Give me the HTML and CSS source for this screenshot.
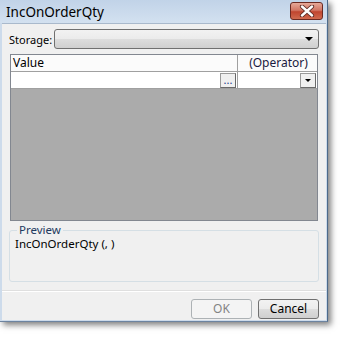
FILE: index.html
```html
<html>
    <head>
        <link rel="stylesheet" href="styles.css">
    </head>
    <body>
        <div id="window">
            <div class="titlebar">
                <span class="title">IncOnOrderQty</span>
                <div class="closeBtn">
                    <svg width="16" height="12" viewBox="0 0 16 12">
                        <path d="M3 1.5 L13 10.5 M13 1.5 L3 10.5" stroke="#5a2a24" stroke-width="4.2" stroke-linecap="round"/>
                        <path d="M3 1.5 L13 10.5 M13 1.5 L3 10.5" stroke="#ffffff" stroke-width="2.4" stroke-linecap="round"/>
                    </svg>
                </div>
            </div>

            <div class="client">
                <div class="storageRow">
                    <label class="storageLabel">Storage:</label>
                    <div class="combo">
                        <span class="arrow"></span>
                    </div>
                </div>

                <div class="grid">
                    <div class="headRow">
                        <div class="cell valueCol">Value</div>
                        <div class="cell opCol center">(Operator)</div>
                    </div>
                    <div class="dataRow">
                        <div class="cell valueCol editCell">
                            <div class="ellipsis">...</div>
                        </div>
                        <div class="cell opCol editCell">
                            <div class="dropBtn"><span class="arrow small"></span></div>
                        </div>
                    </div>
                    <div class="empty"></div>
                </div>

                <div class="group">
                    <span class="groupTitle">Preview</span>
                    <div class="previewText">IncOnOrderQty (, )</div>
                </div>

                <div class="separator"></div>

                <div class="buttons">
                    <div class="btn disabled">OK</div>
                    <div class="btn">Cancel</div>
                </div>
            </div>
        </div>
    </body>
</html>
```

FILE: styles.css
```css
body {
    margin: 0;
    background: #ffffff;
    font-family: "Noto Sans", "DejaVu Sans", sans-serif;
    font-size: 12px;
    color: #000000;
}

#window {
    width: 328px;
    height: 322px;
    box-sizing: border-box;
    background: #cddbeb;
    border-right: 1px solid #4d6a8a;
    border-bottom: 1px solid #6d84a0;
    box-shadow: 3px 3px 6px rgba(0, 0, 0, 0.5);
    display: flex;
    flex-direction: column;
}

.titlebar {
    height: 23px;
    display: flex;
    align-items: center;
    padding-left: 6px;
    padding-right: 4px;
    background: linear-gradient(#c1d3e8, #d3e1f0);
}

.title {
    flex: 1;
    font-size: 13.5px;
    color: #000000;
}

.closeBtn {
    width: 31px;
    height: 16px;
    margin-top: -2px;
    border: 1px solid #6b2a22;
    border-radius: 3px;
    background: linear-gradient(#e6a898, #d27765 45%, #c0452f 55%, #d06a4f);
    display: flex;
    align-items: center;
    justify-content: center;
}

.client {
    flex: 1;
    margin: 0 1px 1px 2px;
    background: #f0f0f0;
    border-top: 1px solid #a9b9cc;
    display: flex;
    flex-direction: column;
}

.storageRow {
    display: flex;
    align-items: center;
    height: 20px;
    margin-top: 5px;
    padding: 0 7px;
}

.storageLabel {
    flex: none;
    width: 45px;
    font-size: 11px;
}

.combo {
    flex: 1;
    height: 20px;
    box-sizing: border-box;
    border: 1px solid #707070;
    border-radius: 3px;
    background: linear-gradient(#f2f2f2, #ebebeb 50%, #dddddd 51%, #cfcfcf);
    display: flex;
    align-items: center;
    justify-content: flex-end;
    padding-right: 5px;
}

.arrow {
    width: 0;
    height: 0;
    border-left: 4px solid transparent;
    border-right: 4px solid transparent;
    border-top: 4px solid #000000;
}

.arrow.small {
    border-left-width: 3px;
    border-right-width: 3px;
    border-top-width: 3px;
}

.grid {
    height: 167px;
    margin: 5px 8px 0 8px;
    box-sizing: border-box;
    border: 1px solid #828790;
    background: #ababab;
    display: flex;
    flex-direction: column;
}

.headRow, .dataRow {
    display: flex;
    height: 16px;
    background: #ffffff;
    border-bottom: 1px solid #a0a0a0;
}

.headRow {
    background: #fbfbfb;
}

.cell {
    box-sizing: border-box;
    line-height: 16px;
    padding-left: 2px;
}

.valueCol {
    width: 227px;
    border-right: 1px solid #a0a0a0;
}

.opCol {
    flex: 1;
    color: #1a1a40;
}

.center {
    text-align: center;
}

.editCell {
    display: flex;
    justify-content: flex-end;
    align-items: center;
    padding-right: 1px;
}

.ellipsis {
    width: 16px;
    height: 15px;
    box-sizing: border-box;
    border: 1px solid #9a9a9a;
    border-right-color: #6a6a6a;
    border-bottom-color: #6a6a6a;
    background: #f0f0f0;
    font-size: 11px;
    line-height: 12px;
    text-align: center;
    color: #1c3c8c;
}

.dropBtn {
    width: 16px;
    height: 15px;
    box-sizing: border-box;
    border: 1px solid #9a9a9a;
    border-right-color: #6a6a6a;
    border-bottom-color: #6a6a6a;
    background: #f0f0f0;
    display: flex;
    align-items: center;
    justify-content: center;
}

.empty {
    flex: 1;
}

.group {
    height: 52px;
    margin: 9px 7px 0 7px;
    box-sizing: border-box;
    border: 1px solid #d5dfe5;
    border-radius: 3px;
    padding-left: 5px;
}

.groupTitle {
    display: inline-block;
    margin-top: -7px;
    margin-left: 2px;
    padding: 0 2px;
    background: #f0f0f0;
    color: #1e3a5f;
    font-size: 11.5px;
    line-height: 12px;
    vertical-align: top;
}

.previewText {
    font-size: 11.5px;
    line-height: 13px;
    margin-top: 1px;
}

.separator {
    height: 1px;
    margin-top: 8px;
    background: #dfdfdf;
    border-bottom: 1px solid #ffffff;
}

.buttons {
    display: flex;
    justify-content: flex-end;
    gap: 6px;
    margin-top: 7px;
    padding-right: 7px;
}

.btn {
    width: 61px;
    height: 20px;
    box-sizing: border-box;
    border: 1px solid #707070;
    border-radius: 3px;
    background: linear-gradient(#f2f2f2, #ebebeb 50%, #dddddd 51%, #cfcfcf);
    text-align: center;
    line-height: 18px;
}

.btn.disabled {
    border-color: #adb2b5;
    background: #f4f4f4;
    color: #838383;
}
```
